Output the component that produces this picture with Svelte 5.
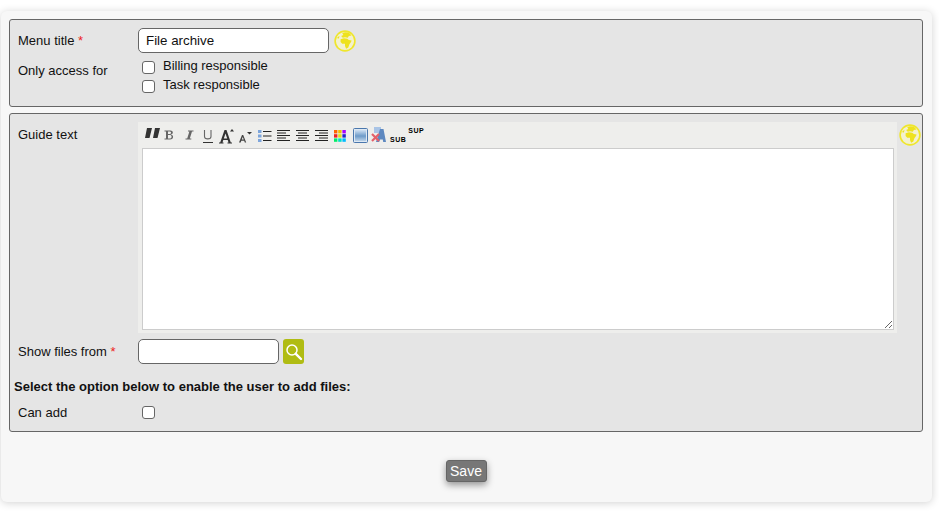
<script>
  const globePath = "M7.500 3 L10 2 L13.500 2.500 L16 5 L13.500 5.500 L12.500 7 L10 6.500 L8 7 L6.500 5.500 L8.500 4.500Z M6 8.500 L9 7.500 L12 8 L13.500 9 L16 9.500 L15.500 11 L14 13 L13 16 L11 17 L10 14.500 L10 12.500 L7.500 12.500 L6 11Z M3 6.500 L5 5.500 L4.500 7.500 L3.500 8Z";
</script>

{#snippet globe()}
  <svg class="globe" width="22" height="22" viewBox="0 0 20 20" aria-hidden="true">
    <circle cx="10" cy="10" r="9" fill="#f3f1cf" stroke="#efe62c" stroke-width="1.500"/>
    <path d={globePath} fill="#eee21e"/>
  </svg>
{/snippet}

<div class="page">
  <main class="card">
    <section class="box first">
      <div class="row title-row">
        <label class="lbl" for="title">Menu title <span class="req">*</span></label>
        <input id="title" class="text wide" type="text" value="File archive" />
        {@render globe()}
      </div>
      <div class="row access-row">
        <span class="lbl">Only access for</span>
        <div class="checks">
          <label class="check"><input type="checkbox" /><span>Billing responsible</span></label>
          <label class="check"><input type="checkbox" /><span>Task responsible</span></label>
        </div>
      </div>
    </section>

    <section class="box second">
      <div class="row guide-row">
        <span class="lbl guide-lbl">Guide text</span>
        <div class="editor">
          <div class="toolbar">
            <svg class="ic t-quote" width="15" height="10" viewBox="0 0 15 10"><path d="M2 0h5L4.500 10H0zM10 0h5l-2.500 10H8z" fill="#333"/></svg>
            <svg class="ic t-bold" width="11" height="14" viewBox="0 0 11 14"><path d="M.5 2.500h6c3.200 0 3.200 4-.2 4 3.800 0 3.800 5-.3 5H.5v-1H2v-7H.5zM4 3.500v2.500h2c1.500 0 1.500-2.500 0-2.500zM4 7v3.500h2.200c1.800 0 1.800-3.500 0-3.500z" fill="#666" fill-rule="evenodd"/></svg>
            <svg class="ic t-ital" width="10" height="14" viewBox="0 0 10 14"><path d="M4 2.500h5.500v1H8L5.800 10.500h1.500v1H1.500v-1h1.700l2.200-7H4z" fill="#666"/></svg>
            <svg class="ic t-und" width="12" height="14" viewBox="0 0 12 14"><path d="M2.500 1v6.500c0 3.200 6.500 3.200 6.500 0V1" fill="none" stroke="#666" stroke-width="1.100"/><path d="M1 13.500h10" stroke="#333"/></svg>
            <svg class="ic t-big" width="16" height="16" viewBox="0 0 16 16"><path d="M0 15.500V14.500H1.200L5.500 2h2l4.300 12.500H13v1H8.500v-1h1L8.700 12H4.300l-.8 2.500h1v1zM4.800 10.500h3.400L6.500 5.500z" fill="#333" fill-rule="evenodd"/><path d="M11 3.500 13 1l2 2.500z" fill="#333"/></svg>
            <svg class="ic t-small" width="13" height="14" viewBox="0 0 13 14"><path d="M0 13.500 3 6h1.200l3 7.500H5.800l-.6-1.800H2.300l-.6 1.800zM2.800 10.500h2L3.700 8z" fill="#444" fill-rule="evenodd"/><path d="M8 3h5l-2.500 2.500z" fill="#333"/></svg>
            <svg class="ic t-list" width="14" height="14" viewBox="0 0 14 14"><g fill="#7da5dc"><rect x="0" y="1" width="3.500" height="3"/><rect x="0" y="5.500" width="3.500" height="3"/><rect x="0" y="10" width="3.500" height="3"/></g><path d="M5 2.500h8.500M5 7h8.500M5 11.500h8.500" stroke="#222"/></svg>
            <svg class="ic t-left" width="13" height="13" viewBox="0 0 13 13"><path d="M0 1.500h13M0 4h9M0 6.500h13M0 9h9M0 11.500h13" stroke="#222"/></svg>
            <svg class="ic t-al" width="13" height="13" viewBox="0 0 13 13"><path d="M0 1.500h13M2 4h9M0 6.500h13M2 9h9M0 11.500h13" stroke="#222"/></svg>
            <svg class="ic t-al" width="13" height="13" viewBox="0 0 13 13"><path d="M0 1.500h13M4 4h9M0 6.500h13M4 9h9M0 11.500h13" stroke="#222"/></svg>
            <svg class="ic t-col" width="12" height="12" viewBox="0 0 12 12">
              <rect x="0" y="0" width="3.400" height="3.400" fill="#f60"/><rect x="4.200" y="0" width="3.400" height="3.400" fill="#f0c000"/><rect x="8.400" y="0" width="3.400" height="3.400" fill="#a0f"/>
              <rect x="0" y="4.200" width="3.400" height="3.400" fill="#e22"/><rect x="4.200" y="4.200" width="3.400" height="3.400" fill="#e0e010"/><rect x="8.400" y="4.200" width="3.400" height="3.400" fill="#22c"/>
              <rect x="0" y="8.400" width="3.400" height="3.400" fill="#0e6"/><rect x="4.200" y="8.400" width="3.400" height="3.400" fill="#0dc"/><rect x="8.400" y="8.400" width="3.400" height="3.400" fill="#0bf"/>
            </svg>
            <svg class="ic t-img" width="15" height="15" viewBox="0 0 15 15"><defs><linearGradient id="imgfill" x1="0" y1="0" x2="0" y2="1"><stop offset="0" stop-color="#cfe0f2"/><stop offset=".55" stop-color="#6d9bc9"/><stop offset="1" stop-color="#bcd2e8"/></linearGradient></defs><rect x=".5" y=".5" width="14" height="14" rx="1" fill="#dde8f3" stroke="#4a77ad"/><rect x="2" y="2" width="11" height="11" fill="url(#imgfill)"/></svg>
            <svg class="ic t-rem" width="16" height="16" viewBox="0 0 16 16"><rect x="3" y="0" width="7" height="6" fill="#a9c4e6"/><path d="M5 15 9 2h3.500l2.500 13h-2.800l-.4-2.500H9l-.8 2.500z" fill="#5d88c0"/><path d="M1 7l7 7M8 7l-7 7" stroke="#e4606a" stroke-width="2.200"/></svg>
            <span class="script sub">SUB</span>
            <span class="script sup">SUP</span>
          </div>
          <div class="area-wrap"><textarea class="area"></textarea></div>
        </div>
        <div class="guide-globe">{@render globe()}</div>
      </div>

      <div class="row files-row">
        <label class="lbl" for="files">Show files from <span class="req">*</span></label>
        <input id="files" class="text narrow" type="text" />
        <button class="search" type="button" aria-label="Search">
          <svg width="18" height="18" viewBox="0 0 18 18"><circle cx="7" cy="7" r="5" fill="none" stroke="#fff" stroke-width="1.500"/><path d="M10.800 10.800 16 16" stroke="#fff" stroke-width="2.400" stroke-linecap="round"/></svg>
        </button>
      </div>

      <p class="note">Select the option below to enable the user to add files:</p>

      <div class="row add-row">
        <span class="lbl">Can add</span>
        <input class="single" type="checkbox" />
      </div>
    </section>

    <div class="actions"><button class="save" type="button">Save</button></div>
  </main>
</div>

<style>
  :global(body) {
    margin: 0;
    background: #fff;
  }
  .page {
    width: 939px;
    height: 512px;
    box-sizing: border-box;
    padding: 11px 7px 10px 1px;
    overflow: hidden;
    font-family: "Liberation Sans", Arial, sans-serif;
    font-size: 13px;
    color: #111;
  }
  .card {
    height: 491px;
    box-sizing: border-box;
    padding: 8px 9px 0 8px;
    background: #f7f7f7;
    border-radius: 6px;
    box-shadow: 0 1px 8px rgba(0, 0, 0, 0.18);
  }
  .box {
    box-sizing: border-box;
    background: #e5e5e5;
    border: 1px solid #666;
    border-radius: 3px;
  }
  .first {
    height: 88px;
    padding: 8px 8px 0;
  }
  .second {
    height: 319px;
    margin-top: 6px;
    padding: 8px 8px 0;
  }
  .row {
    display: flex;
    align-items: flex-start;
  }
  .lbl {
    flex: 0 0 120px;
    line-height: 16px;
  }
  .req {
    color: #e22;
  }
  .title-row {
    height: 25px;
    align-items: center;
  }
  .text {
    box-sizing: border-box;
    height: 25px;
    margin: 0;
    padding: 0 7px;
    background: #fff;
    border: 1px solid #666;
    border-radius: 5px;
    font: 13.333px "Liberation Sans", Arial, sans-serif;
    color: #111;
    outline: none;
  }
  .wide {
    width: 191px;
  }
  .narrow {
    width: 141px;
  }
  .globe {
    display: block;
    flex: none;
  }
  .title-row .globe {
    margin-left: 5px;
  }
  .access-row {
    margin-top: 5px;
  }
  .access-row .lbl {
    padding-top: 5px;
  }
  .checks {
    display: flex;
    flex-direction: column;
    gap: 3px;
  }
  .check {
    display: flex;
    align-items: center;
    height: 16px;
    padding-left: 4px;
  }
  .check input,
  .single {
    width: 13px;
    height: 13px;
    margin: 0;
    flex: none;
    appearance: none;
    box-sizing: border-box;
    background: #fff;
    border: 1px solid #666;
    border-radius: 3px;
  }
  .check input {
    margin-top: 2px;
  }
  .check span {
    margin-left: 8px;
    line-height: 16px;
  }
  .guide-row {
    height: 211px;
  }
  .guide-lbl {
    padding-top: 5px;
  }
  .editor {
    width: 759px;
    flex: none;
    box-sizing: border-box;
    background: #eeeeec;
  }
  .toolbar {
    display: flex;
    align-items: flex-start;
    height: 26px;
    box-sizing: border-box;
    padding: 5px 0 0 7px;
  }
  .ic {
    display: block;
    flex: none;
  }
  .t-quote { margin-top: 1px; }
  .t-bold { margin: 1px 0 0 4px; }
  .t-ital { margin: 1px 0 0 9px; }
  .t-und { margin: 2px 0 0 8px; }
  .t-big { margin: 1px 0 0 5px; }
  .t-small { margin: 2px 0 0 4px; }
  .t-list { margin: 2px 0 0 6px; }
  .t-left { margin: 2px 0 0 5px; }
  .t-al { margin: 2px 0 0 6px; }
  .t-col { margin: 3px 0 0 6px; }
  .t-img { margin: 1px 0 0 7px; }
  .t-rem { margin: 0 0 0 3px; }
  .script {
    font-family: "Liberation Sans", Arial, sans-serif;
    font-size: 7px;
    font-weight: 700;
    line-height: 9px;
    letter-spacing: 0.5px;
    color: #000;
  }
  .sub {
    margin: 8px 0 0 3px;
  }
  .sup {
    margin: -1px 0 0 2px;
  }
  .area-wrap {
    padding: 0 3px 3px 4px;
  }
  .area {
    display: block;
    width: 752px;
    height: 182px;
    box-sizing: border-box;
    margin: 0;
    padding: 2px;
    background: #fff;
    border: 1px solid #ccc;
    outline: none;
  }
  .guide-globe {
    margin-left: 2px;
    margin-top: 2px;
  }
  .files-row {
    margin-top: 6px;
    align-items: center;
    height: 25px;
  }
  .search {
    display: flex;
    align-items: center;
    justify-content: center;
    width: 21px;
    height: 25px;
    margin: 0 0 0 4px;
    padding: 0;
    background: #b0bc13;
    border: 0;
    border-radius: 3px;
  }
  .note {
    margin: 15px 0 0 -4px;
    font-weight: 700;
    line-height: 16px;
  }
  .add-row {
    margin-top: 10px;
    align-items: center;
    height: 16px;
  }
  .single {
    margin-left: 4px;
    margin-top: -2px;
  }
  .actions {
    display: flex;
    justify-content: center;
    padding: 28px 0 0 0;
  }
  .save {
    width: 41px;
    height: 22px;
    padding: 0;
    background: #777;
    border: 1px solid #666;
    border-radius: 3px;
    color: #fff;
    font: 14px "Liberation Sans", Arial, sans-serif;
    box-shadow: 0 3px 7px rgba(0, 0, 0, 0.4);
  }
</style>
